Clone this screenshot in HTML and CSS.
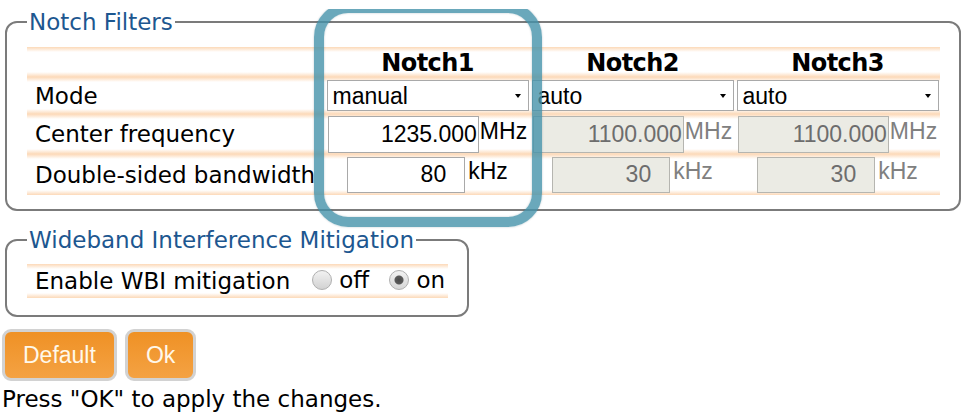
FILE: index.html
```html
<!DOCTYPE html>
<html lang="en">
<head>
  <meta charset="UTF-8">
  <title>Notch Filters</title>
  <link rel="stylesheet" href="styles.css">
</head>
<body>
  <fieldset class="group notch-group">
    <legend>Notch Filters</legend>
    <table class="settings notch-table">
      <colgroup>
        <col class="col-label">
        <col class="col-notch">
        <col class="col-notch">
        <col class="col-notch">
      </colgroup>
      <tr class="row-head">
        <td></td>
        <th>Notch1</th>
        <th>Notch2</th>
        <th>Notch3</th>
      </tr>
      <tr class="row-mode">
        <td class="label">Mode</td>
        <td><span class="select-wrap"><select id="mode1"><option selected>manual</option><option>auto</option></select></span></td>
        <td><span class="select-wrap"><select id="mode2"><option>manual</option><option selected>auto</option></select></span></td>
        <td><span class="select-wrap"><select id="mode3"><option>manual</option><option selected>auto</option></select></span></td>
      </tr>
      <tr class="row-freq">
        <td class="label">Center frequency</td>
        <td><input type="text" class="freq" value="1235.000"><span class="unit">MHz</span></td>
        <td><input type="text" class="freq" value="1100.000" disabled><span class="unit off">MHz</span></td>
        <td><input type="text" class="freq" value="1100.000" disabled><span class="unit off">MHz</span></td>
      </tr>
      <tr class="row-bw">
        <td class="label">Double-sided bandwidth</td>
        <td><input type="text" class="bw" value="80"><span class="unit gap">kHz</span></td>
        <td><input type="text" class="bw" value="30" disabled><span class="unit gap off">kHz</span></td>
        <td><input type="text" class="bw" value="30" disabled><span class="unit gap off">kHz</span></td>
      </tr>
    </table>
  </fieldset>

  <fieldset class="group wbi-group">
    <legend>Wideband Interference Mitigation</legend>
    <table class="settings wbi-table">
      <tr class="row-wbi">
        <td class="label">Enable WBI mitigation</td>
        <td class="choices">
          <label><input type="radio" name="wbi" value="off">off</label>
          <label><input type="radio" name="wbi" value="on" checked>on</label>
        </td>
      </tr>
    </table>
  </fieldset>

  <div class="actions">
    <button class="btn">Default</button>
    <button class="btn">Ok</button>
  </div>
  <div class="hint">Press "OK" to apply the changes.</div>

  <!-- annotation drawn over the Notch1 column -->
  <div class="highlight"></div>
</body>
</html>
```

FILE: styles.css
```css
body {
  font-family: "DejaVu Sans", Verdana, sans-serif;
  font-size: 23px;
  color: #000;
  background-color: #fff;
  margin: 9px 1px 0 2px;
  position: relative;
}

fieldset.group {
  border: 2px solid #7b7b7b;
  border-radius: 12px;
  margin: 0 2px 0 3px;
  padding: 12px 19px 14px 20px;
}

legend {
  color: #1d5790;
  padding: 0 2px;
}

fieldset.wbi-group {
  width: max-content;
  margin-top: 16px;
  padding: 11px 19px 17px 20px;
}

table.settings {
  border-collapse: collapse;
}

.notch-table {
  table-layout: fixed;
  width: 913px;
}

.col-label {
  width: 298px;
}

.col-notch {
  width: 205px;
}

table.settings td,
table.settings th {
  padding: 0;
  white-space: nowrap;
  vertical-align: middle;
  background: linear-gradient(to bottom, #fcd9b8 0, #fff 5px, #fff calc(100% - 5px), #fcd9b8 100%);
}

table.settings th {
  font-weight: bold;
  font-size: 24px;
  letter-spacing: -0.6px;
  text-align: center;
  padding-top: 2px;
}

.notch-table td {
  text-align: center;
}

table.settings td.label {
  text-align: left;
  padding-left: 8px;
}

.row-head th,
.row-head td {
  height: 28px;
}

.row-mode td {
  height: 37px;
}

.row-freq td {
  height: 40px;
}

.row-bw td {
  height: 41px;
}

.select-wrap {
  position: relative;
  display: inline-block;
  vertical-align: middle;
}

.select-wrap::after {
  content: "";
  position: absolute;
  right: 8px;
  top: 14px;
  border-left: 3px solid transparent;
  border-right: 3px solid transparent;
  border-top: 4px solid #000;
  pointer-events: none;
}

select {
  appearance: none;
  width: 202px;
  height: 31px;
  font-family: "Liberation Sans", Arial, sans-serif;
  font-size: 23px;
  color: #000;
  background-color: #fff;
  border: 1px solid #a9a9a9;
  border-radius: 0;
  padding: 0 0 0 5px;
  margin: 0;
  display: block;
}

input[type="text"] {
  font-family: "Liberation Sans", Arial, sans-serif;
  font-size: 23px;
  color: #000;
  background-color: #fff;
  border: 1px solid #a9a9a9;
  text-align: right;
  margin: 0;
  box-sizing: border-box;
  vertical-align: middle;
}

input.freq {
  width: 151px;
  height: 37px;
  padding: 0 1px 0 2px;
}

input.bw {
  width: 118px;
  height: 36px;
  padding: 0 18px 0 2px;
}

input[type="text"]:disabled {
  background-color: #ebebe4;
  color: #6d6d6d;
  border-color: #b5b5b0;
}

.unit {
  font-family: "Liberation Sans", Arial, sans-serif;
  font-size: 23px;
  vertical-align: middle;
  margin-left: 1px;
  position: relative;
  top: -3px;
}

.unit.gap {
  margin-left: 3px;
}

.unit.off {
  color: #808080;
}

.row-wbi td {
  height: 34px;
}

.wbi-table td.label {
  padding-right: 22px;
}

table.settings td.choices {
  padding-right: 3px;
}

.choices label {
  display: inline-flex;
  align-items: center;
}

.choices label + label {
  margin-left: 13px;
}

input[type="radio"] {
  appearance: none;
  width: 20px;
  height: 20px;
  margin: 0 7px 0 0;
  border-radius: 50%;
  border: 1px solid #b0b0b0;
  background: linear-gradient(to bottom, #f2f2f2, #d2d2d2);
}

input[type="radio"]:checked {
  background: radial-gradient(circle, #4a4a4a 0, #5a5a5a 4px, transparent 5px),
              linear-gradient(to bottom, #f2f2f2, #d6d6d6);
}

.actions {
  display: flex;
  gap: 8px;
  margin-top: 12px;
}

.btn {
  font-family: "Liberation Sans", Arial, sans-serif;
  font-size: 23px;
  color: #fff8ea;
  background: linear-gradient(to bottom, #ef9125, #f4a243);
  border: 3px solid #d2d2d2;
  border-radius: 9px;
  height: 52px;
  padding: 0 18px;
  cursor: pointer;
}

.hint {
  margin-top: 5px;
}

.highlight {
  position: absolute;
  left: 312px;
  top: -6px;
  width: 208px;
  height: 204px;
  border: 10px solid rgba(69, 146, 170, 0.8);
  border-radius: 34px;
  box-shadow: 0 0 2px rgba(0, 60, 80, 0.3), inset 0 0 2px rgba(0, 60, 80, 0.3);
  pointer-events: none;
}
```
